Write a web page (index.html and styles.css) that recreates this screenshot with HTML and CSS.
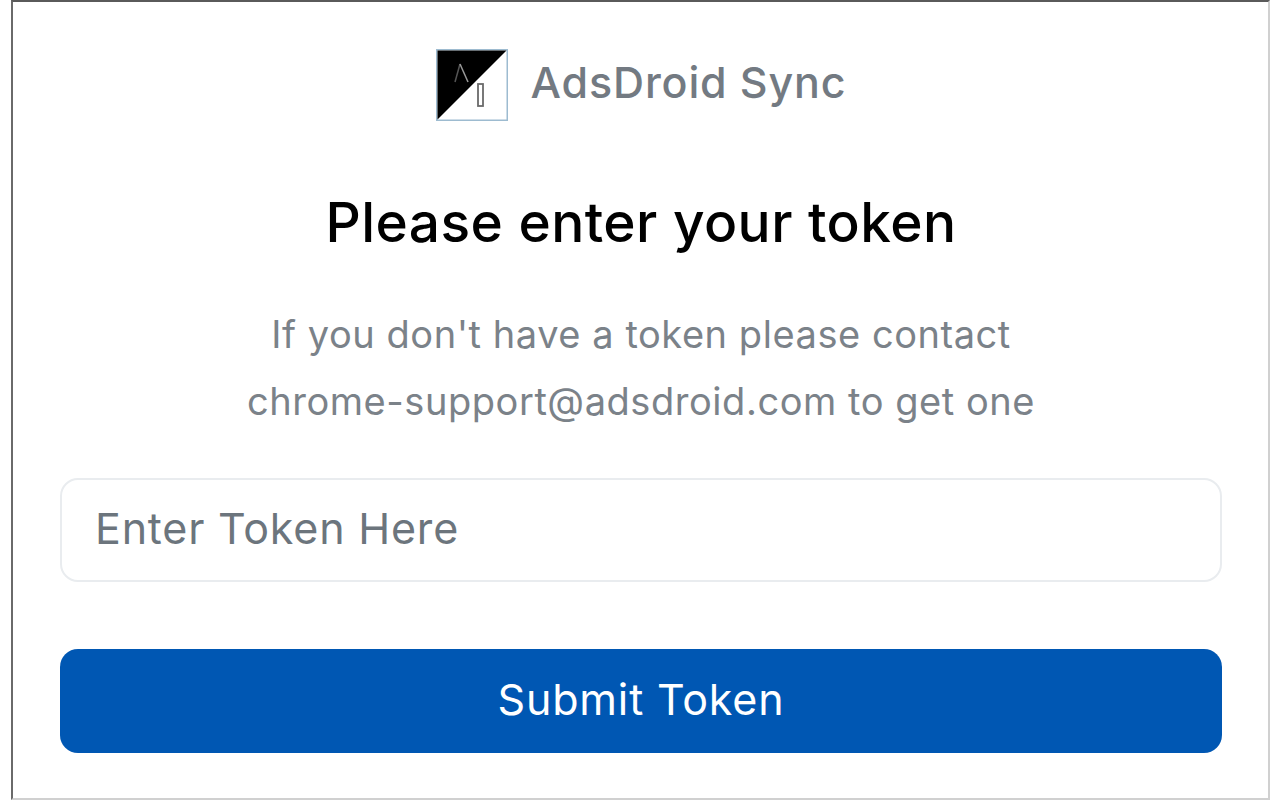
FILE: index.html
```html
<!DOCTYPE html>
<html lang="en">
<head>
  <meta charset="UTF-8">
  <title>AdsDroid Sync</title>
  <link rel="stylesheet" href="styles.css">
</head>
<body>
  <div class="frame">
    <header class="brand">
      <svg class="logo" width="72" height="72" viewBox="0 0 72 72">
        <rect x="0.75" y="0.75" width="70.5" height="70.5" fill="#fff" stroke="#9dbbd0" stroke-width="1.5"/>
        <polygon points="1.5,1.5 70.5,1.5 1.5,70.5" fill="#000"/>
        <path d="M19 33 L24 15" fill="none" stroke="#555" stroke-width="1.5"/>
        <path d="M24 15 L32 33" fill="none" stroke="#999" stroke-width="1.5"/>
        <rect x="42" y="35" width="5" height="22" fill="#fff" stroke="#6a6a6a" stroke-width="1.8"/>
      </svg>
      <span class="brand_name">AdsDroid Sync</span>
    </header>

    <h1 class="title">Please enter your token</h1>

    <p class="hint">If you don't have a token please contact<br>chrome-support@adsdroid.com to get one</p>

    <form class="token_form">
      <input class="token_input" type="text" placeholder="Enter Token Here">
      <button class="submit" type="button">Submit Token</button>
    </form>
  </div>
</body>
</html>
```

FILE: styles.css
```css
* {
  box-sizing: border-box;
}

body {
  margin: 0;
  background: #fff;
  font-family: Inter, "Liberation Sans", sans-serif;
}

.frame {
  width: 1259px;
  height: 800px;
  margin-left: 11px;
  padding: 47px 46px 0 47px;
  border-style: solid;
  border-width: 2px;
  border-color: #5a5a5a #d0d0d0 #d0d0d0 #6a6a6a;
  background: #fff;
}

.brand {
  display: flex;
  justify-content: center;
  align-items: center;
  gap: 23px;
}

.logo {
  display: block;
}

.brand_name {
  padding-bottom: 6px;
  font-size: 43px;
  font-weight: 500;
  letter-spacing: 0.85px;
  color: #737a82;
}

.title {
  margin: 63px 0 0;
  font-size: 55px;
  font-weight: 500;
  line-height: 76px;
  letter-spacing: 0.45px;
  text-align: center;
  color: #000;
}

.hint {
  margin: 41px 0 0;
  font-size: 38px;
  line-height: 67px;
  letter-spacing: 0.55px;
  text-align: center;
  color: #7b8289;
}

.token_form {
  display: flex;
  flex-direction: column;
  gap: 67px;
  margin-top: 43px;
}

.token_input {
  height: 104px;
  padding: 0 33px 4px;
  border: 2px solid #e9ecef;
  border-radius: 18px;
  font: inherit;
  font-size: 43px;
  letter-spacing: 0.8px;
  color: #495057;
}

.token_input::placeholder {
  color: #6c757d;
  opacity: 1;
}

.submit {
  height: 104px;
  padding: 0 0 4px;
  border: none;
  border-radius: 18px;
  background: #0057b3;
  font: inherit;
  font-size: 43px;
  letter-spacing: 0.85px;
  color: #fff;
}
```
